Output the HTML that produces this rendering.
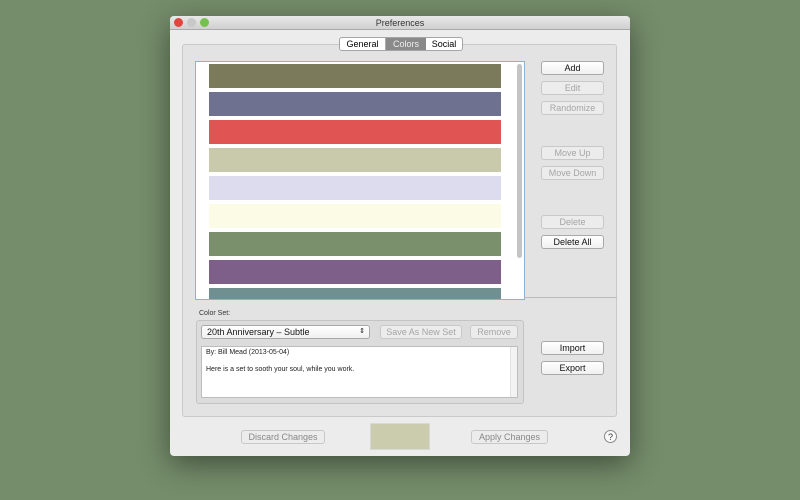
<!DOCTYPE html>
<html><head><style>
body{margin:0;width:800px;height:500px;background:#758d6b;position:relative;overflow:hidden;font-family:"Liberation Sans",sans-serif;}
.a{position:absolute;box-sizing:border-box;}
.win{left:170px;top:16px;width:460px;height:440px;background:#ececec;border-radius:4px;box-shadow:0 8px 30px rgba(0,0,0,.45);overflow:hidden}
.title{left:0;top:0;width:460px;height:14px;background:linear-gradient(#e8e8e8,#d0d0d0);border-bottom:1px solid #aaa;font-size:9px;text-align:center;line-height:14px;color:#333}
.dot{width:9px;height:9px;border-radius:50%;top:2px}
.btn{height:14px;background:linear-gradient(#fff,#f0f0f0);border:1px solid #a9a9a9;border-radius:3px;font-size:9px;text-align:center;line-height:12px;color:#111}
.dis{color:#a5a5a5;border-color:#c8c8c8;background:#ececec}
.bar{left:13px;width:292px;height:24px}
</style></head><body>
<div class="a win">
 <div class="a title">Preferences
  <div class="a dot" style="left:4px;background:#e0453f"></div>
  <div class="a dot" style="left:17px;background:#c8c8c8"></div>
  <div class="a dot" style="left:30px;background:#76c04f"></div>
 </div>
 <div class="a" style="left:12px;top:28px;width:435px;height:373px;background:#e3e3e3;border:1px solid #c9c9c9;border-radius:3px"></div>
 <div class="a" style="left:169px;top:21px;width:124px;height:14px;border:1px solid #a5a5a5;border-radius:3px;background:#fff;font-size:9px;line-height:12px;display:flex">
  <div style="width:45px;text-align:center;border-right:1px solid #aaa">General</div>
  <div style="width:40px;text-align:center;background:#8a8a8a;color:#eee">Colors</div>
  <div style="flex:1;text-align:center">Social</div>
 </div>
 <div class="a" style="left:25px;top:45px;width:330px;height:239px;background:#fff;border:1px solid #8eb0d8;overflow:hidden">
  <div class="a bar" style="top:2px;background:#7b7b5c"></div>
  <div class="a bar" style="top:30px;background:#6e7190"></div>
  <div class="a bar" style="top:58px;background:#e05553"></div>
  <div class="a bar" style="top:86px;background:#c9c9ab"></div>
  <div class="a bar" style="top:114px;background:#dcdcee"></div>
  <div class="a bar" style="top:142px;background:#fbfbe6"></div>
  <div class="a bar" style="top:170px;background:#7a8f6c"></div>
  <div class="a bar" style="top:198px;background:#7d5f8a"></div>
  <div class="a bar" style="top:226px;background:#6f8f90"></div>
  <div class="a" style="left:321px;top:2px;width:5px;height:194px;background:#c4c4c4;border-radius:3px"></div>
 </div>
 <div class="a" style="left:354px;top:281px;width:93px;height:1px;background:#bbb"></div>
 <div class="a btn" style="left:371px;top:45px;width:63px;">Add</div>
 <div class="a btn dis" style="left:371px;top:65px;width:63px;">Edit</div>
 <div class="a btn dis" style="left:371px;top:85px;width:63px;">Randomize</div>
 <div class="a btn dis" style="left:371px;top:130px;width:63px;">Move Up</div>
 <div class="a btn dis" style="left:371px;top:150px;width:63px;">Move Down</div>
 <div class="a btn dis" style="left:371px;top:199px;width:63px;">Delete</div>
 <div class="a btn" style="left:371px;top:219px;width:63px;">Delete All</div>
 <div class="a btn" style="left:371px;top:325px;width:63px;">Import</div>
 <div class="a btn" style="left:371px;top:345px;width:63px;">Export</div>
 <div class="a" style="left:29px;top:294px;font-size:7px;color:#333">Color Set:</div>
 <div class="a" style="left:26px;top:304px;width:328px;height:84px;background:#dcdcdc;border:1px solid #c4c4c4;border-radius:3px"></div>
 <div class="a btn" style="left:31px;top:309px;width:169px;text-align:left;padding-left:5px;font-size:9px">20th Anniversary – Subtle<span style="position:absolute;right:4px;font-size:7px">⇕</span></div>
 <div class="a btn dis" style="left:210px;top:309px;width:82px;">Save As New Set</div>
 <div class="a btn dis" style="left:300px;top:309px;width:48px;">Remove</div>
 <div class="a" style="left:31px;top:330px;width:317px;height:52px;background:#fff;border:1px solid #bdbdbd;font-size:7px;color:#222;padding:1px 4px;line-height:9px">By: Bill Mead (2013-05-04)<br><div style="height:8px"></div>Here is a set to sooth your soul, while you work.
  <div class="a" style="right:0;top:0;width:7px;height:50px;background:#f3f3f3;border-left:1px solid #e3e3e3"></div></div>
 <div class="a btn dis" style="left:71px;top:414px;width:84px;color:#888">Discard Changes</div>
 <div class="a" style="left:200px;top:407px;width:60px;height:27px;background:#cbcbad;border:1px solid #d8d8d8"></div>
 <div class="a btn dis" style="left:301px;top:414px;width:77px;color:#888">Apply Changes</div>
 <div class="a" style="left:434px;top:414px;width:13px;height:13px;border:1px solid #888;border-radius:50%;background:#fafafa;font-size:9px;text-align:center;line-height:12px;color:#333">?</div>
</div>
</body></html>
